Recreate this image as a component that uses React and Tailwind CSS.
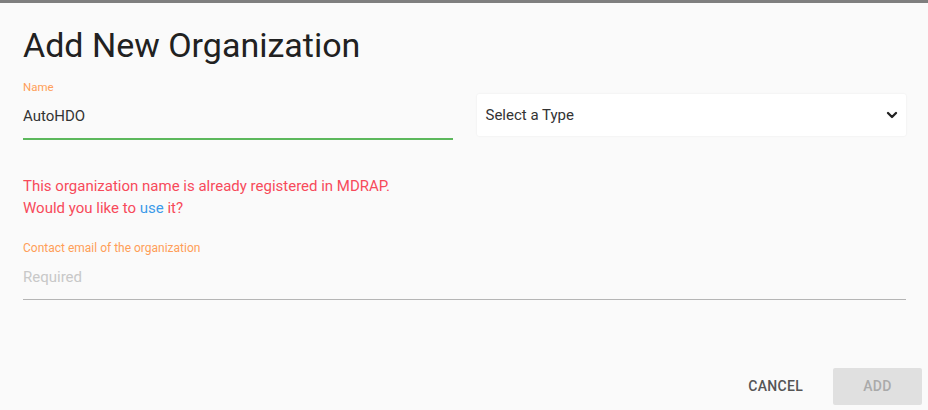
import React from 'react'
import { ChevronDown } from 'lucide-react'

export default function App() {
  return (
    <div className="w-[928px] h-[410px] bg-[#fafafa] overflow-hidden flex flex-col font-['Roboto',sans-serif]">
      <div className="h-[3px] bg-[#7f7f7f] shrink-0" />

      <div className="flex-1 flex flex-col px-[23px] pr-[22px]">
        <h1 className="mt-[22px] text-[34px] leading-[40px] text-[#212121] font-normal">Add New Organization</h1>

        {/* Name + type row */}
        <div className="grid grid-cols-2 gap-6 mt-[15px]">
          <div className="flex flex-col">
            <label className="text-[11.5px] leading-[14px] text-[#ff9e58]">Name</label>
            <div className="mt-[13px] text-[15px] leading-[18px] text-[#333]">AutoHDO</div>
            <div className="mt-[13px] h-[2px] bg-[#5cb85c]" />
          </div>
          <div className="pt-[14px]">
            <div className="h-[42px] bg-white rounded-[2px] shadow-[0_0_2px_rgba(0,0,0,0.08)] flex items-center justify-between pl-[9px] pr-[6px]">
              <span className="text-[15px] text-[#333]">Select a Type</span>
              <ChevronDown className="w-[16px] h-[16px] text-[#222]" strokeWidth={3.5} />
            </div>
          </div>
        </div>

        {/* Duplicate warning */}
        <div className="mt-[35px] text-[15px] leading-[22px] text-[#f74a5a]">
          <p>This organization name is already registered in MDRAP.</p>
          <p>
            Would you like to <a className="text-[#3d9be9] cursor-pointer">use</a> it?
          </p>
        </div>

        {/* Contact email */}
        <div className="flex flex-col mt-[22px]">
          <label className="text-[12px] leading-[14px] text-[#ff9e58]">Contact email of the organization</label>
          <div className="mt-[13px] text-[15px] leading-[18px] text-[#c8c8c8]">Required</div>
          <div className="mt-[13px] h-px bg-[#b5b5b5]" />
        </div>

        <div className="mt-auto mb-[5px] flex justify-end items-center gap-[30px] -mr-[16px]">
          <button className="text-[14px] font-medium text-[#555] tracking-[0.3px]">CANCEL</button>
          <button className="w-[89px] h-[37px] bg-[#e0e0e0] rounded-[2px] text-[14px] font-medium text-[#aaa] tracking-[0.3px]">ADD</button>
        </div>
      </div>
    </div>
  )
}
